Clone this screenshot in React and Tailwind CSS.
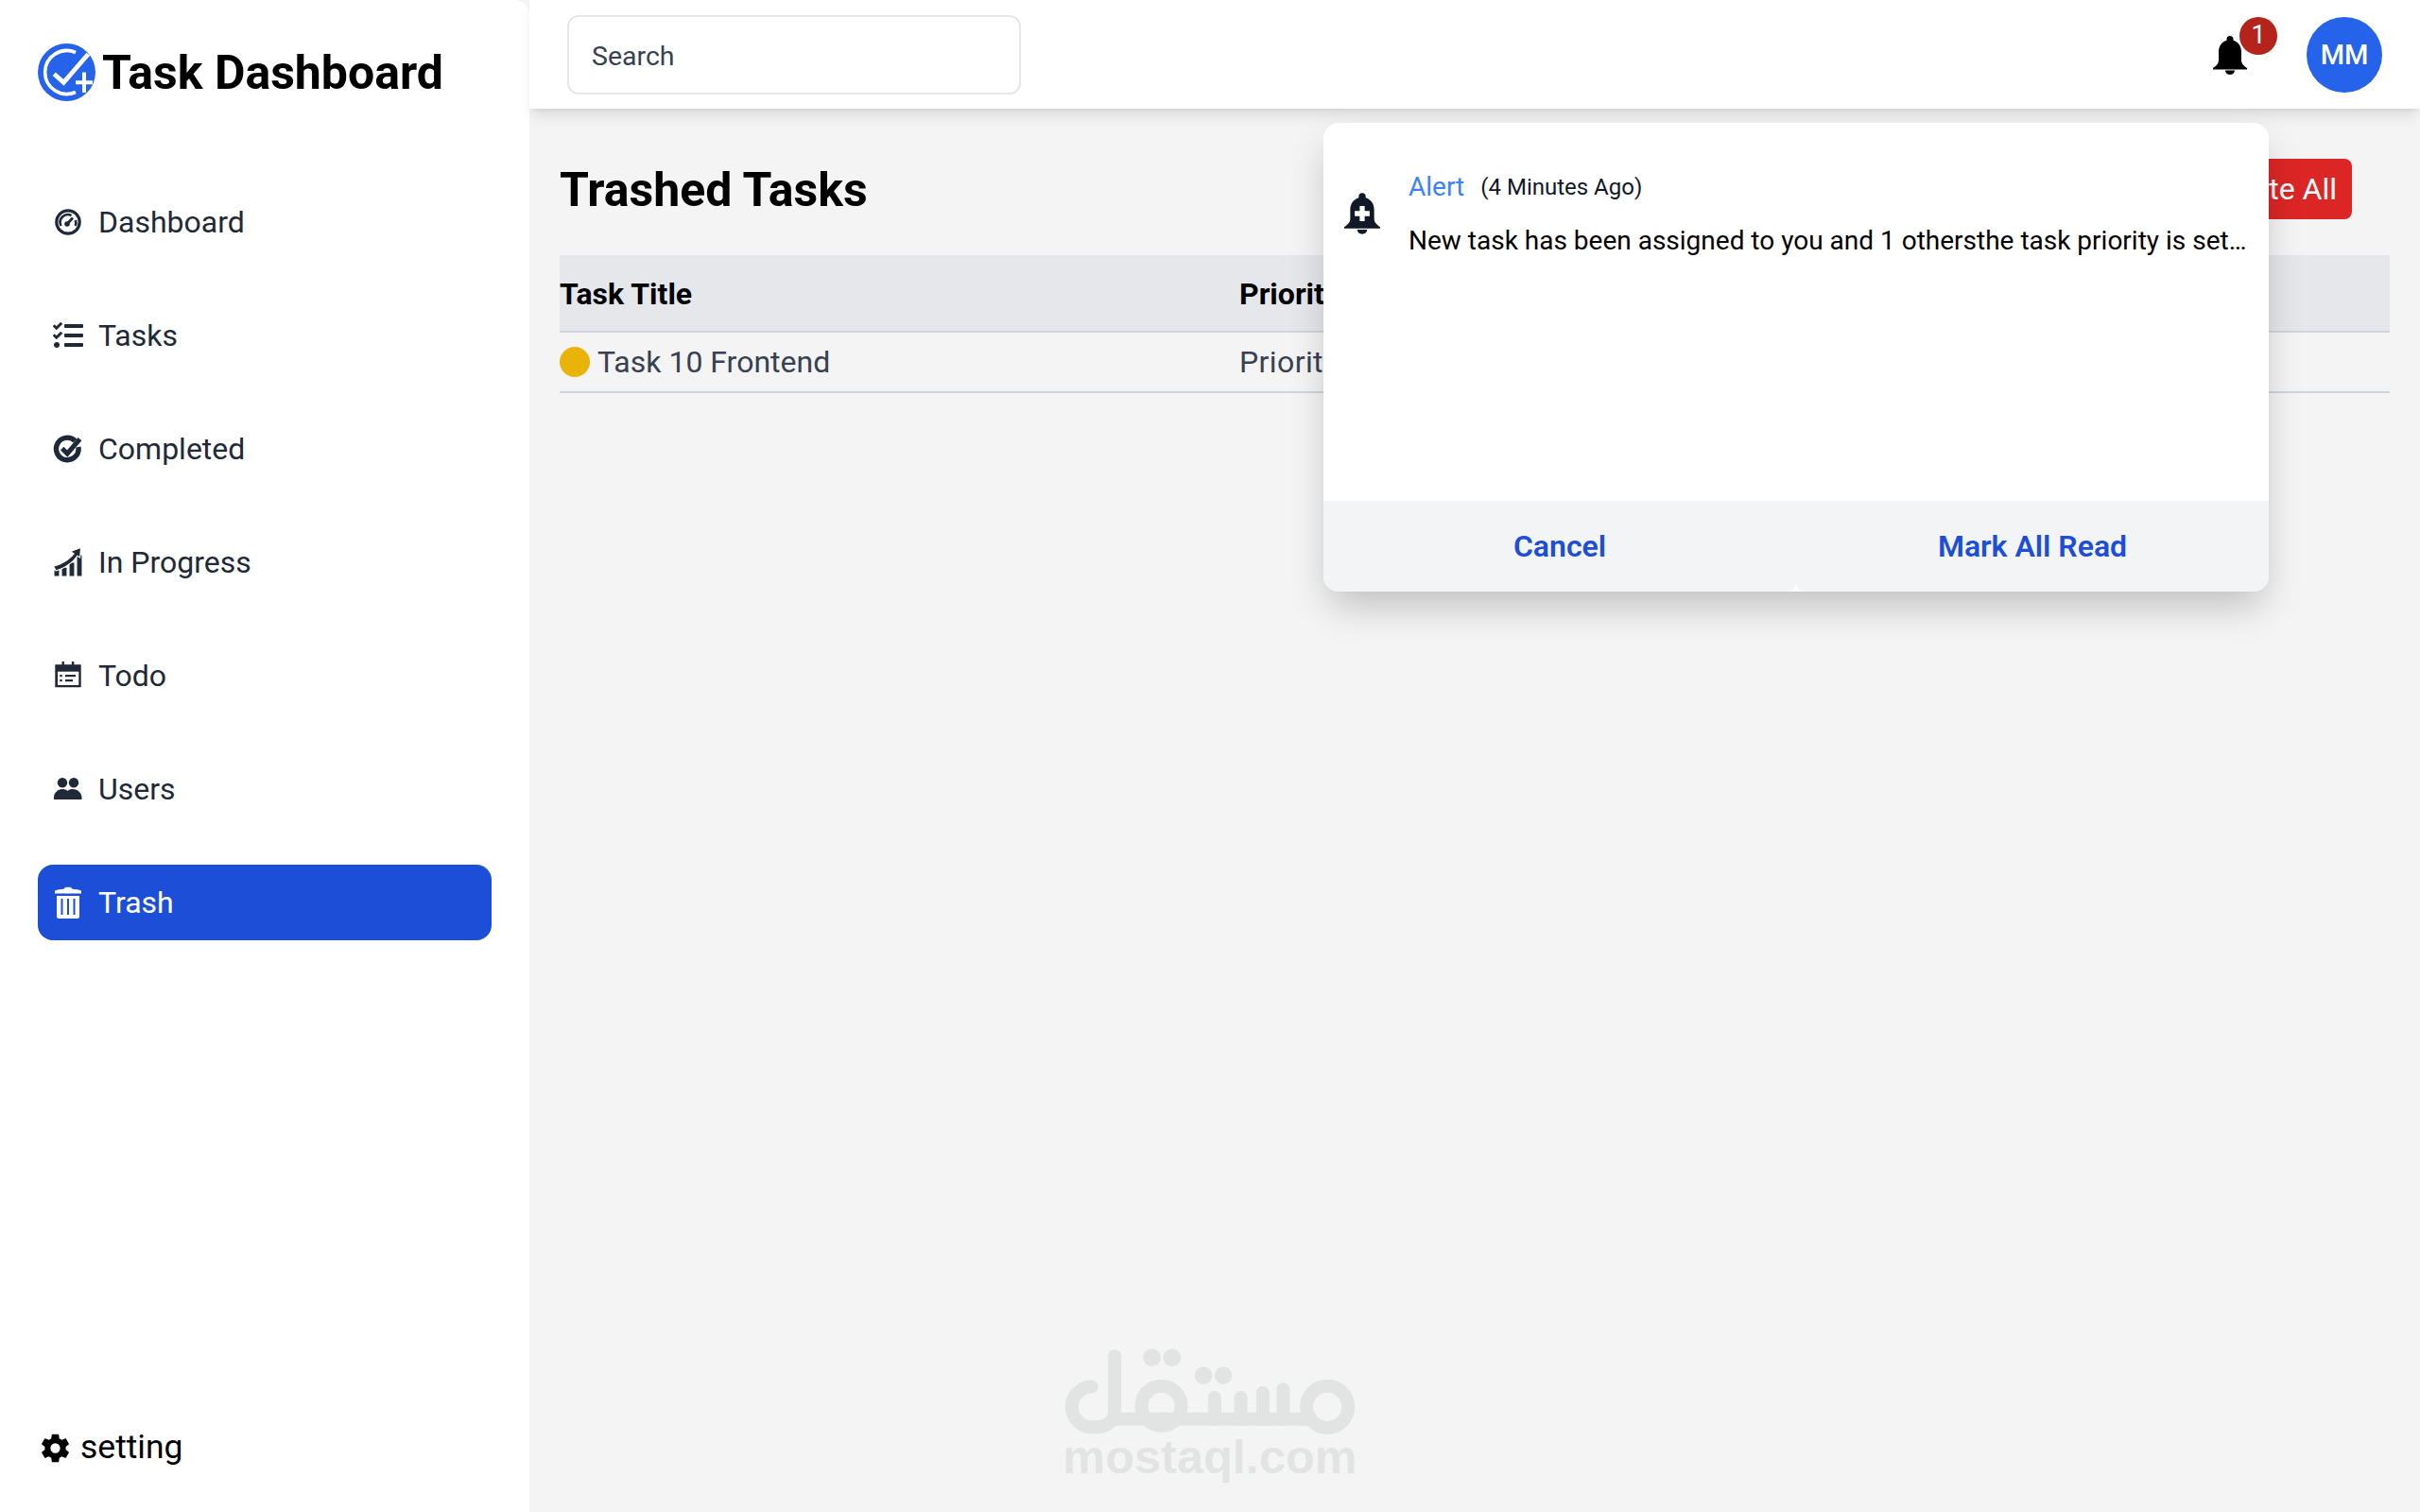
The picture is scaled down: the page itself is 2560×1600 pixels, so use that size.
import React from "react";
import { FaTasks } from "react-icons/fa";
import { GiProgression } from "react-icons/gi";
import { IoSettingsSharp } from "react-icons/io5";

const bellBody =
  "M18 0a3.5 3.5 0 0 1 3.5 3.5v1.2C27 6.500 30 11 30 17v8.500c0 4 3 6.500 6 8.500v1.500H0V34c3-2 6-4.500 6-8.500V17C6 11 9 6.500 14.500 4.700V3.500A3.500 3.500 0 0 1 18 0z";

const Bell = ({ className }) => (
  <svg viewBox="0 0 36 41" className={className} fill="currentColor">
    <path d={bellBody} />
    <path d="M13 36.500h10a5 4.500 0 0 1-10 0z" />
  </svg>
);

const BellPlus = ({ className }) => (
  <svg viewBox="0 0 36 41" className={className}>
    <path d={bellBody} fill="#111827" />
    <path d="M13 36.500h10a5 4.500 0 0 1-10 0z" fill="#111827" />
    <path d="M18 13v15M10.500 20.500h15" stroke="#fff" strokeWidth="5" fill="none" />
  </svg>
);

const Gauge = () => (
  <svg viewBox="0 0 32 32" className="w-8 h-8" fill="none" stroke="currentColor">
    <circle cx="16" cy="16" r="12.2" strokeWidth="3.2" />
    <path d="M8.500 20a8.200 8.200 0 0 1 11-11" strokeWidth="2.600" />
    <path d="M23.800 14a8.200 8.200 0 0 1 0 6" strokeWidth="2.600" />
    <circle cx="15" cy="18" r="2.800" fill="currentColor" stroke="none" />
    <path d="M15 18l6-6.500" strokeWidth="2.800" />
  </svg>
);

const Check = () => (
  <svg viewBox="0 0 32 32" className="w-8 h-8" fill="none" stroke="currentColor">
    <path d="M23.500 7.500A11.800 11.800 0 1 0 26.900 14" strokeWidth="5.400" />
    <path d="M9.700 15.500l5.500 5.500L28.500 5.700" strokeWidth="5" />
  </svg>
);

const Todo = () => (
  <svg viewBox="0 0 32 32" className="w-8 h-8" fill="currentColor">
    <path d="M9.500 1h2.400v3.300h8V1h2.400v3.300h7.400v24H2.300v-24h7.200z" />
    <rect x="5" y="11.700" width="22.300" height="14.300" fill="#fff" />
    <rect x="7.300" y="15" width="2.400" height="2.200" />
    <rect x="7.300" y="20" width="2.400" height="2.200" />
    <rect x="13" y="15" width="11" height="2.200" />
    <rect x="13" y="20" width="8" height="2.200" />
  </svg>
);

const People = () => (
  <svg viewBox="0 0 32 32" className="w-8 h-8" fill="currentColor">
    <circle cx="10" cy="9.200" r="5.200" />
    <circle cx="22" cy="9.200" r="5.200" />
    <path d="M1 27v-2c0-5 4-9 9-9 2 0 4 .6 5.500 2 1.500-1.400 3.500-2 5.500-2 5 0 9.500 4 9.500 9v2z" />
  </svg>
);

const Trash = () => (
  <svg viewBox="0 0 32 34" className="w-8 h-[34px]" fill="currentColor">
    <path d="M2 4.500C5 3.500 8.500 3 11.500 2.800 12 1.300 13.500.8 16 .8s4 .5 4.500 2C23.500 3 27 3.500 30 4.500V7.500H2z" />
    <path fillRule="evenodd" d="M4 10h24v21.500a2.500 2.500 0 0 1-2.500 2.500h-19A2.500 2.500 0 0 1 4 31.500zM8.500 13v17h2V13zm6.500 0v17h2V13zm6.500 0v17h2V13z" />
  </svg>
);

const Logo = () => (
  <svg viewBox="0 0 62 62" className="w-[62px] h-[62px] shrink-0">
    <circle cx="30.500" cy="30.500" r="30.500" fill="#2563eb" />
    <path d="M40 9.500A23 23 0 1 0 40 51.500" fill="none" stroke="#fff" strokeWidth="3.600" />
    <path d="M17.300 32.300l10 9L53.300 11.300" fill="none" stroke="#fff" strokeWidth="4.800" />
    <path d="M49 30.500V52M40 41.300H58" stroke="#fff" strokeWidth="4" />
  </svg>
);

const Mostaql = () => (
  <svg viewBox="130 100 935 285" className="w-[312px] h-[95px]" fill="none" stroke="#e2e3e3" strokeWidth="42" strokeLinecap="round">
    <path d="M222 227A64 64 0 1 0 225 356C262 356 295 345 295 300V130" />
    <path d="M280 330H930" strokeLinecap="butt" />
    <circle cx="443" cy="288" r="63" />
    <circle cx="970" cy="291" r="66" />
    <path d="M612 262V330M695 262V330M765 246V330M830 235V330" />
    <g fill="#e2e3e3" stroke="none">
      <circle cx="413" cy="135" r="28" />
      <circle cx="477" cy="135" r="28" />
      <circle cx="577" cy="192" r="28" />
      <circle cx="640" cy="192" r="28" />
    </g>
  </svg>
);

const items = [
  { label: "Dashboard", icon: <Gauge /> },
  { label: "Tasks", icon: <FaTasks className="w-8 h-8" /> },
  { label: "Completed", icon: <Check /> },
  { label: "In Progress", icon: <GiProgression className="w-8 h-8" /> },
  { label: "Todo", icon: <Todo /> },
  { label: "Users", icon: <People /> },
  { label: "Trash", icon: <Trash />, active: true },
];

export default function App() {
  return (
    <div className="relative flex h-[1600px] w-[2560px] overflow-hidden bg-[#f4f4f4] font-['Roboto',sans-serif]">
      <aside className="flex h-full w-[560px] shrink-0 flex-col rounded-tr-2xl bg-white pl-10 pr-10">
        <div className="mt-[43px] flex h-[68px] items-center gap-[6px]">
          <Logo />
          <span className="text-[50px] font-bold leading-none text-black">Task Dashboard</span>
        </div>
        <nav className="mt-[84px] flex flex-col gap-10">
          {items.map((it) => (
            <div
              key={it.label}
              className={
                it.active
                  ? "flex h-20 items-center gap-4 rounded-2xl bg-[#1d4ed8] pl-4 text-[32px] text-white"
                  : "flex h-20 items-center gap-4 pl-4 text-[32px] text-[#1f2937]"
              }
            >
              <span className="flex w-8 shrink-0 justify-center">{it.icon}</span>
              <span>{it.label}</span>
            </div>
          ))}
        </nav>
        <div className="mt-auto mb-10 flex h-[56px] items-center gap-[10px] pl-[2px] text-[35.5px] text-black">
          <IoSettingsSharp className="h-[33px] w-[33px]" />
          <span>setting</span>
        </div>
      </aside>

      <div className="flex min-w-0 flex-1 flex-col">
        <header className="relative z-10 flex h-[115px] shrink-0 items-center justify-between bg-white pl-10 pr-10 shadow-lg">
          <div className="flex h-[84px] w-[480px] items-center rounded-xl border-2 border-[#e5e7eb] px-6 pt-[5px] text-[28.5px] text-[#374151]">
            Search
          </div>
          <div className="flex items-center">
            <div className="relative mr-[63px] mt-[1px]">
              <Bell className="h-[41px] w-[36px] text-black" />
              <span className="absolute -right-[32px] -top-[20px] flex h-10 w-10 items-center justify-center rounded-full bg-[#b4241a] text-[27px] text-white">1</span>
            </div>
            <div className="flex h-20 w-20 items-center justify-center rounded-full bg-[#2563eb] pt-[2px] text-[29px] font-medium text-white">MM</div>
          </div>
        </header>

        <main className="flex-1 pl-8 pr-8">
          <div className="mt-[53px] flex h-16 items-center justify-between">
            <h1 className="pt-px text-[50px] font-bold leading-none text-black">Trashed Tasks</h1>
            <button className="mr-10 flex h-16 items-center rounded-lg bg-[#dc2626] px-4 text-[32px] text-white">Delete All</button>
          </div>
          <table className="mt-[38px] w-full border-collapse text-left text-[32px]">
            <thead>
              <tr className="h-[81px] border-b-2 border-[#d1d5db] bg-[#e5e7eb] text-black">
                <th className="w-[719px] p-0 pt-[2px] font-bold">Task Title</th>
                <th className="p-0 pt-[2px] font-bold">Priority</th>
              </tr>
            </thead>
            <tbody>
              <tr className="h-[64px] border-b-2 border-[#d1d5db] text-[#374151]">
                <td className="p-0">
                  <div className="flex items-center gap-2">
                    <span className="h-8 w-8 rounded-full bg-[#eab308]" />
                    <span>Task 10 Frontend</span>
                  </div>
                </td>
                <td className="p-0"><span className="tracking-[0.4px]">Priority Normal</span></td>
              </tr>
            </tbody>
          </table>
        </main>
      </div>

      <div className="absolute left-[1400px] top-[130px] z-20 flex h-[496px] w-[1000px] flex-col overflow-hidden rounded-2xl bg-white shadow-[0_20px_40px_-6px_rgba(0,0,0,0.22)]">
        <div className="flex flex-1 items-start pl-[22px] pt-[50px]">
          <BellPlus className="mt-[24px] h-[44px] w-[38px] shrink-0" />
          <div className="ml-[30px] w-[893px]">
            <div className="flex items-center gap-[17px] leading-[36px]">
              <span className="text-[28px] text-[#3b82f6]">Alert</span>
              <span className="text-[24px] text-[#111827]">(4 Minutes Ago)</span>
            </div>
            <p className="mt-[21px] truncate text-[28px] leading-[36px] text-black">New task has been assigned to you and 1 othersthe task priority is set a normal priority</p>
          </div>
        </div>
        <div className="relative flex h-[96px] shrink-0 bg-[#f3f4f6] text-[32px] font-semibold text-[#1d4ed8]">
          <div className="flex w-1/2 items-center justify-center">Cancel</div>
          <div className="flex w-1/2 items-center justify-center">Mark All Read</div>
          <svg viewBox="0 0 16 9" className="absolute bottom-0 left-[492px] h-[9px] w-4"><path d="M0 9C5 8 7 5 8 0c1 5 3 8 8 9z" fill="#fff" /></svg>
        </div>
      </div>

      <div className="absolute left-[1124px] top-[1425px] flex flex-col items-center">
        <Mostaql />
        <span className="-mt-[3px] font-['Liberation_Sans',sans-serif] text-[50.5px] font-bold leading-[50px] text-[#e2e3e3]">mostaql.com</span>
      </div>
    </div>
  );
}
